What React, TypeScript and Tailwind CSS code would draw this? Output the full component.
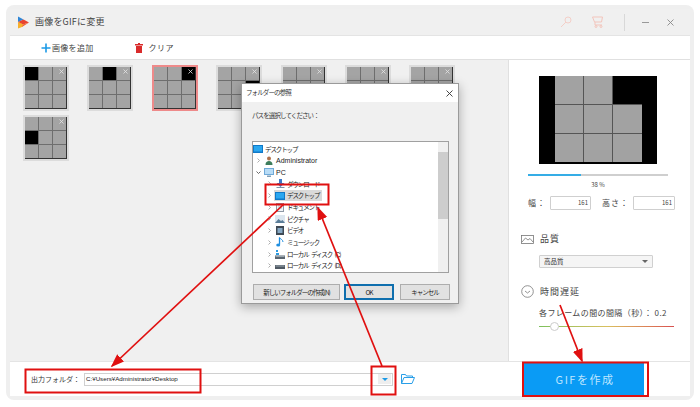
const jp = "font-['Noto_Sans_CJK_JP','Noto_Sans',sans-serif]";

// which cell of the 3x3 preview is black, per thumbnail
const thumbs = [0, 1, 2, 5, 8, 7, 6, 3];

function Thumb({ black, active }: { black: number; active?: boolean }) {
  return (
    <div className={`relative h-[46px] w-[46px] border-2 ${active ? "border-[#ee8a8a]" : "border-[#dcdcdc]"}`}>
      <div className="grid h-full w-full grid-cols-3 grid-rows-3 gap-px border-b border-r border-[#333] bg-[#6e6e6e]">
        {Array.from({ length: 9 }).map((_, i) => (
          <div key={i} className={i === black ? "bg-black" : "bg-[#a4a4a4]"} />
        ))}
      </div>
      <svg className="absolute right-[3px] top-[2px]" width="5" height="5" viewBox="0 0 5 5">
        <path d="M0.5 0.5l4 4M4.500 0.5l-4 4" stroke="#e4e4e4" strokeWidth="0.8" />
      </svg>
    </div>
  );
}

function Logo() {
  return (
    <svg width="12" height="13" viewBox="0 0 12 13">
      <path d="M1 0.5L6.500 3.500 1 6z" fill="#2f86d6" />
      <path d="M1 6L6.500 3.500 12 6.500 6 8.500z" fill="#e8432f" />
      <path d="M1 6L6 8.500 12 6.500 5 11z" fill="#f2612f" />
      <path d="M1 6v6.500L5 11 6 8.500z" fill="#f7b02c" />
    </svg>
  );
}

const Chevron = ({ down }: { down?: boolean }) => (
  <svg width="5" height="5" viewBox="0 0 5 5" fill="none" stroke={down ? "#444" : "#999"} strokeWidth="0.8">
    {down ? <path d="M0.5 1.500L2.500 3.500 4.500 1.500" /> : <path d="M1.500 0.5L3.500 2.500 1.500 4.500" />}
  </svg>
);

const icons: Record<string, React.ReactNode> = {
  desktop: (
    <svg width="10" height="8" viewBox="0 0 10 8">
      <rect width="10" height="8" fill="#1079c8" />
      <path d="M1 1h8v5.500H1z" fill="#2aa7f0" />
    </svg>
  ),
  user: (
    <svg width="8" height="9" viewBox="0 0 8 9">
      <circle cx="4" cy="2.500" r="2" fill="#b0714a" />
      <path d="M0.5 9c0-3 1.500-4 3.500-4s3.500 1 3.500 4z" fill="#3d7d5c" />
    </svg>
  ),
  pc: (
    <svg width="10" height="9" viewBox="0 0 10 9">
      <rect width="10" height="7" fill="#6fa9d8" />
      <rect x="1" y="1" width="8" height="5" fill="#b8dcf6" />
      <path d="M3 7.500h4V9H3z" fill="#7f9fb8" />
    </svg>
  ),
  download: (
    <svg width="9" height="9" viewBox="0 0 9 9">
      <path d="M3 0h3v4h2.500L4.500 8 0.5 4H3z" fill="#3a78c8" />
      <path d="M0.5 8h8v1h-8z" fill="#7d92a8" />
    </svg>
  ),
  doc: (
    <svg width="8" height="9" viewBox="0 0 8 9">
      <rect x="0.5" y="0.5" width="7" height="8" fill="#f2f4f7" stroke="#8d98a5" />
      <path d="M2 3h4M2 5h4" stroke="#9fb2c5" strokeWidth="0.8" />
    </svg>
  ),
  picture: (
    <svg width="10" height="8" viewBox="0 0 10 8">
      <rect width="10" height="8" fill="#dce6ef" />
      <path d="M0 8l3.500-4 2.500 2 1.500-1L10 8z" fill="#5a7d98" />
    </svg>
  ),
  video: (
    <svg width="8" height="9" viewBox="0 0 8 9">
      <rect width="8" height="9" fill="#3e4954" />
      <rect x="1.500" y="2" width="5" height="5" fill="#86a8c4" />
    </svg>
  ),
  music: (
    <svg width="8" height="10" viewBox="0 0 8 10" fill="none">
      <path d="M3.500 0.500v7" stroke="#1f8ee0" strokeWidth="1.300" />
      <path d="M3.500 0.500c1 2 3.500 2 3.500 4.500" stroke="#1f8ee0" strokeWidth="1" />
      <ellipse cx="2.200" cy="8" rx="2" ry="1.500" fill="#1f8ee0" />
    </svg>
  ),
  diskC: (
    <svg width="10" height="9" viewBox="0 0 10 9">
      <path d="M1 0h2v2H1zM1 3h3v2H1z" fill="#2d9be0" />
      <rect y="5.500" width="10" height="3.500" fill="#5b6670" />
      <rect x="0.5" y="6" width="9" height="1" fill="#9aa5ae" />
    </svg>
  ),
  disk: (
    <svg width="10" height="9" viewBox="0 0 10 9">
      <rect y="4" width="10" height="4" fill="#4f5a64" />
      <rect x="0.5" y="4.500" width="9" height="1" fill="#a0aab2" />
    </svg>
  ),
};

type Row = { indent: number; label: string; icon: string; chevron?: "right" | "down"; latin?: boolean };

function TreeRow({ indent, label, icon, chevron, latin }: Row) {
  return (
    <div className="flex h-[11.7px] items-center" style={{ paddingLeft: indent }}>
      {chevron && (
        <span className="flex w-[8px] justify-start">
          <Chevron down={chevron === "down"} />
        </span>
      )}
      <span className="mr-[2px] flex w-[10px] justify-center">{icons[icon]}</span>
      <span
        className={`whitespace-nowrap leading-none text-[#222] ${
          latin ? "font-['Liberation_Sans',sans-serif] text-[7px]" : "text-[6.500px] tracking-[-1.100px] [word-spacing:2px]"
        }`}
      >
        {label}
      </span>
    </div>
  );
}

function Dialog() {
  return (
    <div className={`absolute left-[231px] top-[74px] h-[221px] w-[218px] border border-[#9a9a9a] bg-[#f0f0f0] shadow-[0_3px_10px_rgba(0,0,0,0.3)] ${jp}`}>
      <div className="flex h-[18px] items-center justify-between bg-white pl-[4px] pr-[5px] text-[6.500px] tracking-[-0.900px] text-[#333]">
        <span>フォルダーの参照</span>
        <svg width="7" height="7" viewBox="0 0 7 7"><path d="M0.5 0.5l6 6M6.500 0.5l-6 6" stroke="#333" strokeWidth="0.9" /></svg>
      </div>
      <p className="ml-[10px] mt-[7px] text-[6.500px] leading-[12px] tracking-[-0.900px] text-[#333]">パスを選択してください：</p>
      <div className="relative ml-[10px] mt-[20px] h-[132px] w-[197px] overflow-hidden border border-[#a0a0a0] bg-white pt-[1px]">
        <TreeRow indent={0} label="デスクトップ" icon="desktop" />
        <TreeRow indent={3} chevron="right" label="Administrator" icon="user" latin />
        <TreeRow indent={3} chevron="down" label="PC" icon="pc" latin />
        <TreeRow indent={14} chevron="right" label="ダウンロード" icon="download" />
        <div className="relative">
          <span className="absolute left-[21px] top-0 h-[11.700px] w-[48px] bg-[#d9d9d9]" />
          <div className="relative">
            <TreeRow indent={14} chevron="right" label="デスクトップ" icon="desktop" />
          </div>
        </div>
        <TreeRow indent={14} chevron="right" label="ドキュメント" icon="doc" />
        <TreeRow indent={14} chevron="right" label="ピクチャ" icon="picture" />
        <TreeRow indent={14} chevron="right" label="ビデオ" icon="video" />
        <TreeRow indent={14} chevron="right" label="ミュージック" icon="music" />
        <TreeRow indent={14} chevron="right" label="ローカル ディスク (C:)" icon="diskC" />
        <TreeRow indent={14} chevron="right" label="ローカル ディスク (D:)" icon="disk" />
        <div className="absolute bottom-0 right-0 top-0 w-[10px] bg-[#f0f0f0]">
          <div className="mt-[10px] h-[67px] bg-[#cdcdcd]" />
        </div>
      </div>
      <div className="ml-[11px] mt-[11px] flex gap-[4px] text-[6.500px] leading-none tracking-[-1px] text-[#222]">
        <div className="flex h-[16px] w-[87px] items-center justify-center whitespace-nowrap border border-[#adadad] bg-[#e1e1e1]">新しいフォルダーの作成(N)</div>
        <div className="flex h-[16px] w-[50px] items-center justify-center border-2 border-[#0f6fae] bg-[#e1e1e1]">OK</div>
        <div className="ml-[2px] flex h-[16px] w-[50px] items-center justify-center border border-[#adadad] bg-[#e1e1e1]">キャンセル</div>
      </div>
    </div>
  );
}

export default function App() {
  return (
    <div className={`relative h-[407px] w-[700px] overflow-hidden bg-white pl-[10px] pt-[9px] ${jp}`}>
      <div className="relative flex h-[387px] w-[680px] flex-col rounded-[4px] bg-white shadow-[0_0_0_4px_#efefef]">
        {/* title bar */}
        <div className="flex h-[27px] shrink-0 items-center border-b border-[#e4e4e4] bg-[#f0f0f0] pl-[7px]">
          <Logo />
          <span className="ml-[6px] text-[9px] tracking-[0.2px] text-[#444]">画像をGIFに変更</span>
          <div className="ml-auto flex items-center">
            <svg width="12" height="12" viewBox="0 0 12 12" className="mr-[20px]" fill="none" stroke="#f3cfc8" strokeWidth="1">
              <circle cx="8" cy="4" r="3" />
              <path d="M6 6l-5 5" />
            </svg>
            <svg width="12" height="12" viewBox="0 0 12 12" className="mr-[20px]" fill="none" stroke="#f3c5bc" strokeWidth="1">
              <path d="M0.5 1h10l-1 5h-7zM3 6l0 3h7" />
              <circle cx="4" cy="10.500" r="1" />
              <circle cx="9" cy="10.500" r="1" />
            </svg>
            <span className="mr-[17px] h-[17px] w-px bg-[#d8d8d8]" />
            <span className="mr-[18px] h-px w-[7px] bg-[#999]" />
            <svg width="7" height="7" viewBox="0 0 7 7" className="mr-[16px]">
              <path d="M0.5 0.5l6 6M6.500 0.5l-6 6" stroke="#888" strokeWidth="0.9" />
            </svg>
          </div>
        </div>

        {/* toolbar */}
        <div className="flex h-[24px] shrink-0 items-center border-b border-[#e0e0e0] bg-white pl-[31px] text-[8px] text-[#444]">
          <svg width="10" height="10" viewBox="0 0 10 10"><path d="M5 0.5v9M0.5 5h9" stroke="#1b9ae6" strokeWidth="1.6" /></svg>
          <span className="ml-px tracking-[0.3px]">画像を追加</span>
          <svg width="8" height="10" viewBox="0 0 8 10" className="ml-[41px]">
            <path d="M3 0h2v1h3v1.500H0V1h3zM1 3h6v7H1z" fill="#d92b2b" />
          </svg>
          <span className="ml-[6px] tracking-[0.5px]">クリア</span>
        </div>

        {/* main */}
        <div className="flex min-h-0 flex-1">
          <div className="relative flex-1 bg-[#f0f0f0] pl-[13px] pt-[5px]">
            <div className="grid w-[448px] grid-cols-[repeat(7,46px)] gap-x-[18.4px] gap-y-[4px]">
              {thumbs.map((b, i) => (
                <Thumb key={i} black={b} active={i === 2} />
              ))}
            </div>
          </div>

          <div className="flex w-[182px] shrink-0 flex-col items-start border-l border-[#e0e0e0] bg-white">
            <div className="ml-[30px] mt-[16px] flex h-[88px] w-[118px] justify-center bg-black">
              <div className="grid h-[86px] w-[87px] grid-cols-3 grid-rows-3 gap-px bg-[#555]">
                {Array.from({ length: 9 }).map((_, i) => (
                  <div key={i} className={i === 2 ? "bg-black" : "bg-[#a2a2a2]"} />
                ))}
              </div>
            </div>
            <div className="ml-[19px] mt-[10px] h-[2px] w-[140px] bg-[#cfcfcf]">
              <div className="h-full w-[38%] bg-[#35ade6]" />
            </div>
            <p className="mt-[3px] w-full pl-[1px] pr-[4px] text-center text-[6px] leading-[12px] text-[#444]">38 %</p>
            <div className="ml-[19px] mt-[5px] flex items-center text-[8px] text-[#444]">
              <span className="w-[22px] tracking-[1px]">幅：</span>
              <span className="h-[14px] w-[41px] rounded-[1px] border border-[#cfcfcf] pr-[2px] text-right text-[6px] leading-[12px]">161</span>
              <span className="ml-[11px] w-[31px] tracking-[1px]">高さ：</span>
              <span className="h-[14px] w-[42px] rounded-[1px] border border-[#cfcfcf] pr-[2px] text-right text-[6px] leading-[12px]">161</span>
            </div>
            <div className="ml-[12px] mt-[23px] flex items-center text-[9px] leading-[12px] tracking-[1px] text-[#444]">
              <svg width="13" height="9" viewBox="0 0 13 9" fill="none" stroke="#777" strokeWidth="0.8">
                <rect x="0.5" y="0.5" width="12" height="8" />
                <path d="M1 7l3.500-4 2.500 2 2-1.500 3 3.500" />
              </svg>
              <span className="ml-[6px]">品質</span>
            </div>
            <div className="ml-[30px] mt-[10px] flex h-[13px] w-[114px] items-center justify-between rounded-[1px] border border-[#d0d0d0] bg-[#f5f5f5] pl-[4px] pr-[4px] text-[6.500px] text-[#333]">
              <span>高品質</span>
              <span className="h-0 w-0 border-x-[3px] border-t-[3px] border-x-transparent border-t-[#666]" />
            </div>
            <div className="ml-[12px] mt-[17px] flex items-center text-[9px] leading-[12px] tracking-[1px] text-[#444]">
              <svg width="13" height="13" viewBox="0 0 13 13" fill="none" stroke="#777" strokeWidth="0.8">
                <circle cx="6.500" cy="6.500" r="5.800" />
                <path d="M4 6l2.500 2 2.500-2" />
              </svg>
              <span className="ml-[6px]">時間遅延</span>
            </div>
            <p className="ml-[30px] mt-[9px] whitespace-nowrap text-[8px] leading-[12px] tracking-[0.4px] text-[#444]">各フレームの間の間隔（秒）： 0.2</p>
            <div className="relative ml-[30px] mt-[7px] h-px w-[135px] bg-gradient-to-r from-[#7cc05c] via-[#d8c060] to-[#d85050]">
              <span className="absolute left-[11px] top-[-4px] h-[9px] w-[9px] rounded-full border border-[#ccc] bg-white" />
            </div>
          </div>
        </div>

        {/* bottom bar */}
        <div className="flex h-[35px] shrink-0 items-center border-t border-[#e4e4e4] bg-white pl-[21px]">
          <span className="w-[53px] whitespace-nowrap text-[7px] text-[#333]">出力フォルダ：</span>
          <div className="flex h-[13px] w-[309px] items-center justify-between border border-[#d0d0d0] pl-[1px] pr-[1px] text-[6.200px] text-[#222]">
            <span className="font-['Liberation_Sans',sans-serif]">C:¥Users¥Administrator¥Desktop</span>
            <span className="flex h-[10px] w-[13px] items-center justify-center bg-[#eeeeee]">
              <span className="h-0 w-0 border-x-[3px] border-t-[3px] border-x-transparent border-t-[#1b9ae6]" />
            </span>
          </div>
          <svg width="14" height="10" viewBox="0 0 14 10" className="ml-[8px]" fill="none" stroke="#2a9fe8" strokeWidth="1">
            <path d="M0.5 9.500v-9h4l1 1.500h6v1.500M0.5 9.500h10.500l2.500-6h-10.500l-2.500 6" />
          </svg>
          <div className="ml-[109px] flex h-[33px] w-[120px] items-center justify-center bg-[#0a9bf5] pl-[2px] text-[11px] tracking-[1.5px] text-[#bfe6ff]">
            GIFを作成
          </div>
        </div>

        <Dialog />
      </div>

      {/* annotations drawn on top of the screenshot */}
      <svg className="absolute left-0 top-0" width="700" height="407" viewBox="0 0 700 407" fill="none">
        <defs>
          <marker id="head" markerWidth="8" markerHeight="8" refX="7" refY="3" orient="auto">
            <path d="M0 0L8 3L0 6z" fill="#e01010" />
          </marker>
        </defs>
        <g stroke="#e01010" strokeWidth="2">
          <rect x="265.500" y="184.500" width="63" height="20" />
          <rect x="25.500" y="369.500" width="175" height="23" />
          <rect x="371.500" y="366.500" width="24" height="28" />
          <rect x="523" y="362.500" width="125" height="33.500" />
          <path d="M284 204L112 366" markerEnd="url(#head)" strokeWidth="1.7" />
          <path d="M382 366L318 208" markerEnd="url(#head)" strokeWidth="1.7" />
          <path d="M560 305L582 361" markerEnd="url(#head)" strokeWidth="1.7" />
        </g>
      </svg>
    </div>
  );
}
